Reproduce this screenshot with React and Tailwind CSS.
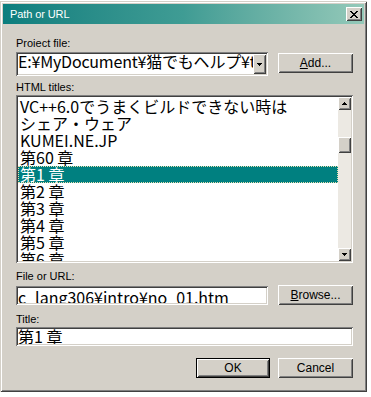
const raised =
  'shadow-[inset_1px_1px_0_#ffffff,inset_-1px_-1px_0_#404040,inset_2px_2px_0_#d4d0c8,inset_-2px_-2px_0_#808080]'
const sunken =
  'shadow-[inset_1px_1px_0_#808080,inset_-1px_-1px_0_#ffffff,inset_2px_2px_0_#404040,inset_-2px_-2px_0_#d4d0c8]'
const jp = "font-['Noto_Sans_CJK_JP',sans-serif]"

const titles = [
  'VC++6.0でうまくビルドできない時は',
  'シェア・ウェア',
  'KUMEI.NE.JP',
  '第60 章',
  '第1 章',
  '第2 章',
  '第3 章',
  '第4 章',
  '第5 章',
  '第6 章',
]

function ArrowUp() {
  return (
    <svg width="5" height="3" viewBox="0 0 5 3">
      <path d="M2 0h1v1h1v1h1v1H0V2h1V1h1z" fill="#000" />
    </svg>
  )
}

function ArrowDown() {
  return (
    <svg width="5" height="3" viewBox="0 0 5 3">
      <path d="M0 0h5v1H4v1H3v1H2V2H1V1H0z" fill="#000" />
    </svg>
  )
}

function CloseGlyph() {
  return (
    <svg width="8" height="7" viewBox="0 0 8 7">
      <path
        d="M0 0h2v1H0zM6 0h2v1H6zM1 1h2v1H1zM5 1h2v1H5zM2 2h4v1H2zM3 3h2v1H3zM2 4h4v1H2zM1 5h2v1H1zM5 5h2v1H5zM0 6h2v1H0zM6 6h2v1H6z"
        fill="#000"
      />
    </svg>
  )
}

function Label({ children, className = '' }) {
  return <div className={`text-[11px] leading-[14px] ${className}`}>{children}</div>
}

function Button({ children, className = '' }) {
  return (
    <div className={`h-[20px] flex items-center justify-center text-[12px] bg-[#d4d0c8] ${raised} ${className}`}>
      {children}
    </div>
  )
}

export default function App() {
  return (
    <div className="w-[371px] h-[397px] bg-white pt-[1px] font-['Liberation_Sans',Arial,sans-serif] text-black">
      <div className="w-[367px] h-[391px] bg-[#d4d0c8] p-[3px] flex flex-col shadow-[inset_1px_1px_0_#d4d0c8,inset_-1px_-1px_0_#404040,inset_2px_2px_0_#ffffff,inset_-2px_-2px_0_#808080]">
        {/* Title bar */}
        <div className="h-[20px] flex items-center pl-[7px] pr-[2px] bg-gradient-to-r from-[#0a7e7e] via-[#3f9c94] to-[#94c9b9]">
          <span className="text-[11px] text-white tracking-[-0.1px]">Path or URL</span>
          <div className={`ml-auto w-[16px] h-[14px] flex items-center justify-center bg-[#d4d0c8] ${raised}`}>
            <CloseGlyph />
          </div>
        </div>

        <div className="flex flex-col pl-[13px] pr-[11px]">
          <Label className="mt-[12px]">Proiect file:</Label>
          <div className="mt-[2px] flex items-start gap-[10px]">
            <div className={`w-[252px] h-[24px] p-[2px] flex bg-white ${sunken}`}>
              <div className={`flex-1 min-w-0 overflow-hidden whitespace-nowrap text-[16px] leading-[15px] tracking-[-0.2px] ${jp}`}>
                E:¥MyDocument¥猫でもヘルプ¥t
              </div>
              <div className={`w-[13px] shrink-0 flex items-center justify-center bg-[#d4d0c8] ${raised}`}>
                <ArrowDown />
              </div>
            </div>
            <Button className="mt-[1px] w-[75px]">
              <span className="underline">A</span>dd...
            </Button>
          </div>

          <Label className="mt-[4px]">HTML titles:</Label>
          <div className={`mt-[1px] h-[168px] p-[2px] flex bg-white ${sunken}`}>
            <div className={`flex-1 overflow-hidden pt-[1px] bg-white text-[16px] ${jp}`}>
              {titles.map((t, i) => (
                <div
                  key={i}
                  className={`h-[17px] leading-[17px] pl-[2px] whitespace-nowrap ${
                    i === 4
                      ? 'bg-[#008080] text-white outline-1 outline-dotted outline-[#e8e0b0] -outline-offset-1'
                      : ''
                  }`}
                >
                  {t}
                </div>
              ))}
            </div>
            <div className="w-[13px] flex flex-col bg-[#ece9e3]">
              <div className={`h-[13px] flex items-center justify-center bg-[#d4d0c8] ${raised}`}>
                <ArrowUp />
              </div>
              <div className="h-[27px]" />
              <div className={`h-[16px] bg-[#d4d0c8] ${raised}`} />
              <div className="flex-1" />
              <div className={`h-[13px] flex items-center justify-center bg-[#d4d0c8] ${raised}`}>
                <ArrowDown />
              </div>
            </div>
          </div>

          <Label className="mt-[6px]">File or URL:</Label>
          <div className="mt-[2px] flex items-start gap-[10px]">
            <div className={`mt-[1px] w-[252px] h-[19px] p-[2px] bg-white ${sunken}`}>
              <div className={`h-full overflow-hidden whitespace-nowrap pt-[2px] text-[16px] leading-[15px] ${jp}`}>
                c_lang306¥intro¥no_01.htm
              </div>
            </div>
            <Button className="w-[75px]">
              <span className="underline">B</span>rowse...
            </Button>
          </div>

          <Label className="mt-[7px]">Title:</Label>
          <div className={`mt-[1px] h-[19px] p-[2px] bg-white ${sunken}`}>
            <div className={`h-full overflow-hidden whitespace-nowrap text-[16px] leading-[15px] ${jp}`}>
              第1 章
            </div>
          </div>

          <div className="mt-[12px] flex justify-end gap-[8px]">
            <Button className="w-[74px] border border-black">OK</Button>
            <Button className="w-[75px]">Cancel</Button>
          </div>
        </div>
      </div>
    </div>
  )
}
